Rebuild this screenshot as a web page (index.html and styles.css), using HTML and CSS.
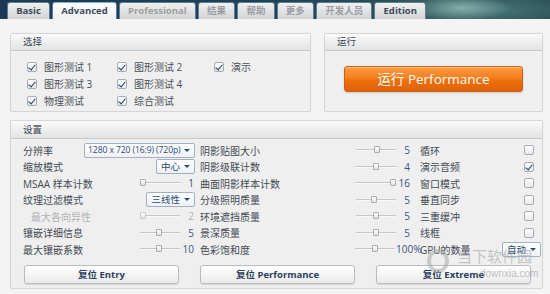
FILE: index.html
```html
<!DOCTYPE html>
<html lang="zh">
<head>
<meta charset="utf-8">
<link rel="stylesheet" href="styles.css">
</head>
<body>
<header class="header">
  <nav class="tabs">
    <div class="tab">Basic</div>
    <div class="tab active">Advanced</div>
    <div class="tab off">Professional</div>
    <div class="tab off">结果</div>
    <div class="tab off">帮助</div>
    <div class="tab off">更多</div>
    <div class="tab off">开发人员</div>
    <div class="tab">Edition</div>
  </nav>
</header>
<main class="page">
  <div class="top-row">
    <section class="panel sel-panel">
      <div class="panel-head">选择</div>
      <div class="sel-grid">
        <div class="chk"><span class="box on"></span>图形测试 1</div>
        <div class="chk"><span class="box on"></span>图形测试 2</div>
        <div class="chk"><span class="box on"></span>演示</div>
        <div class="chk"><span class="box on"></span>图形测试 3</div>
        <div class="chk"><span class="box on"></span>图形测试 4</div>
        <div></div>
        <div class="chk"><span class="box on"></span>物理测试</div>
        <div class="chk"><span class="box on"></span>综合测试</div>
      </div>
    </section>
    <section class="panel run-panel">
      <div class="panel-head">运行</div>
      <div class="run-body"><div class="run-btn">运行 Performance</div></div>
    </section>
  </div>
  <section class="panel settings">
    <div class="panel-head">设置</div>
    <div class="cols">
      <div class="col col1">
        <div class="row"><span class="lbl">分辨率</span><span class="sel sel-res">1280 x 720 (16:9) (720p)<i class="arr"></i></span></div>
        <div class="row"><span class="lbl">缩放模式</span><span class="sel">中心<i class="arr"></i></span></div>
        <div class="row"><span class="lbl">MSAA 样本计数</span><span class="slider"><span class="track"><span class="thumb" style="left:0px"></span></span><span class="val">1</span></span></div>
        <div class="row"><span class="lbl">纹理过滤模式</span><span class="sel">三线性<i class="arr"></i></span></div>
        <div class="row dis"><span class="lbl sub">最大各向异性</span><span class="slider"><span class="track"><span class="thumb" style="left:0px"></span></span><span class="val">2</span></span></div>
        <div class="row"><span class="lbl">镶嵌详细信息</span><span class="slider"><span class="track"><span class="thumb" style="left:16px"></span></span><span class="val">5</span></span></div>
        <div class="row"><span class="lbl">最大镶嵌系数</span><span class="slider"><span class="track"><span class="thumb" style="left:16px"></span></span><span class="val">10</span></span></div>
      </div>
      <div class="col col2">
        <div class="row"><span class="lbl">阴影贴图大小</span><span class="slider"><span class="track"><span class="thumb" style="left:18px"></span></span><span class="val">5</span></span></div>
        <div class="row"><span class="lbl">阴影级联计数</span><span class="slider"><span class="track"><span class="thumb" style="left:17px"></span></span><span class="val">4</span></span></div>
        <div class="row"><span class="lbl">曲面阴影样本计数</span><span class="slider"><span class="track"><span class="thumb" style="left:34px"></span></span><span class="val">16</span></span></div>
        <div class="row"><span class="lbl">分级照明质量</span><span class="slider"><span class="track"><span class="thumb" style="left:15px"></span></span><span class="val">5</span></span></div>
        <div class="row"><span class="lbl">环境遮挡质量</span><span class="slider"><span class="track"><span class="thumb" style="left:17px"></span></span><span class="val">5</span></span></div>
        <div class="row"><span class="lbl">景深质量</span><span class="slider"><span class="track"><span class="thumb" style="left:17px"></span></span><span class="val">5</span></span></div>
        <div class="row"><span class="lbl">色彩饱和度</span><span class="slider"><span class="track"><span class="thumb" style="left:17px"></span></span><span class="val val-wide">100%</span></span></div>
      </div>
      <div class="col col3">
        <div class="row"><span class="lbl">循环</span><span class="box"></span></div>
        <div class="row"><span class="lbl">演示音频</span><span class="box on"></span></div>
        <div class="row"><span class="lbl">窗口模式</span><span class="box"></span></div>
        <div class="row"><span class="lbl">垂直同步</span><span class="box"></span></div>
        <div class="row"><span class="lbl">三重缓冲</span><span class="box"></span></div>
        <div class="row"><span class="lbl">线框</span><span class="box"></span></div>
        <div class="row"><span class="lbl">GPU的数量</span><span class="sel">自动<i class="arr"></i></span></div>
      </div>
    </div>
    <div class="btn-row">
      <div class="btn">复位 Entry</div>
      <div class="btn">复位 Performance</div>
      <div class="btn">复位 Extreme</div>
    </div>
  </section>
</main>
<div class="watermark">
  <span class="wm-logo"></span>
  <span class="wm-cn">当下软件园</span>
  <span class="wm-en">downxia.com</span>
</div>
</body>
</html>
```

FILE: styles.css
```css
* { box-sizing: border-box; }
html, body { margin: 0; padding: 0; }
body {
  width: 550px;
  height: 294px;
  overflow: hidden;
  background: #f4f4f4;
  font-family: "Open Sans", "Noto Sans CJK SC", sans-serif;
  font-size: 10px;
  color: #444a52;
  position: relative;
}
.header {
  height: 19px;
  background:
    radial-gradient(ellipse 70px 18px at 462px 8px, rgba(190,230,220,0.55), rgba(120,170,170,0) 70%),
    radial-gradient(ellipse 160px 30px at 500px 10px, rgba(90,140,140,0.6), rgba(60,100,110,0) 80%),
    linear-gradient(90deg, #1c3a55 0%, #1f4258 50%, #2d5658 80%, #1f3e4a 100%);
  padding-left: 7px;
  display: flex;
  align-items: flex-end;
}
.tabs { display: flex; gap: 2px; height: 17px; }
.tab {
  height: 17px;
  padding: 0 8.2px;
  border: 1px solid #5f7d90;
  border-bottom: none;
  border-radius: 3px 3px 0 0;
  background: linear-gradient(#f0f0f0, #d2d4d6);
  font-weight: bold;
  font-size: 9.5px;
  line-height: 16px;
  color: #3c4b5c;
}
.tab.active {
  background: linear-gradient(#fdfdfd, #eef0f1);
  border-top: 1px solid #7fb0d0;
}
.tab.off { color: #9a9ea2; }
.page { padding: 14px 7px 0 10px; }
.top-row { display: flex; gap: 13px; }
.panel {
  background: #efefef;
  border: 1px solid #d6d6d6;
  border-radius: 2px;
  box-shadow: 0 0 2px rgba(0,0,0,0.06);
}
.panel-head {
  height: 17px;
  line-height: 16px;
  padding-left: 12px;
  background: linear-gradient(#fafafa, #e3e3e3);
  border-bottom: 1px solid #c8c8c8;
  color: #3b4654;
  font-size: 9.5px;
}
.sel-panel { width: 301px; height: 79px; }
.run-panel { width: 219px; height: 79px; }
.sel-grid {
  display: grid;
  grid-template-columns: 90px 97px auto;
  grid-auto-rows: 17px;
  padding: 7px 0 0 16px;
}
.chk { display: flex; align-items: center; gap: 7px; color: #4a5058; }
.box {
  width: 10px; height: 10px;
  border: 1px solid #a8acb2;
  border-radius: 2px;
  background: linear-gradient(#ffffff, #e6e8ea);
  position: relative;
  flex: none;
}
.box.on::after {
  content: "";
  position: absolute;
  left: 2px; top: 0px;
  width: 3px; height: 6px;
  border-right: 1.6px solid #1f3f6e;
  border-bottom: 1.6px solid #1f3f6e;
  transform: rotate(40deg);
}
.run-body { padding: 15px 0 0 19px; }
.run-btn {
  width: 179px; height: 26px;
  border: 1px solid #c9601a;
  border-radius: 3px;
  background: linear-gradient(#fb9a45 0%, #f6801f 45%, #ef6f0a 55%, #e0620a 100%);
  box-shadow: inset 0 1px 0 rgba(255,220,180,0.6), 0 1px 2px rgba(0,0,0,0.15);
  color: #fff;
  font-size: 13.5px;
  line-height: 24px;
  text-align: center;
}
.settings { margin-top: 8px; width: 533px; height: 169px; }
.settings .panel-head { height: 18px; line-height: 17px; }
.cols { display: flex; padding: 3px 0 0 12px; }
.col { display: flex; flex-direction: column; }
.col1 { width: 172px; }
.col2 { width: 211px; margin-left: 5px; }
.col3 { width: 121px; margin-left: 9px; }
.row { height: 16.5px; display: flex; align-items: center; }
.lbl { flex: 1; white-space: nowrap; color: #444a52; }
.lbl.sub { padding-left: 8px; }
.row.dis .lbl, .row.dis .val { color: #b0b3b6; }
.row.dis .thumb { border-color: #c8c8c8; }
.sel {
  height: 15px;
  padding: 0 4px 0 4px;
  border: 1px solid #a2b0c2;
  border-radius: 2px;
  background: linear-gradient(#ffffff, #eef1f4);
  color: #2c4a74;
  font-size: 9.5px;
  line-height: 13px;
  display: flex;
  align-items: center;
  gap: 4px;
  white-space: nowrap;
}
.sel-res { width: 111px; font-size: 8.6px; padding: 0 3px; gap: 3px; letter-spacing: -0.1px; }
.arr {
  width: 0; height: 0;
  border-left: 3px solid transparent;
  border-right: 3px solid transparent;
  border-top: 3px solid #2c4a74;
}
.slider { display: flex; align-items: center; }
.track {
  width: 40px; height: 2px;
  background: #c4c6c8;
  border-bottom: 1px solid #f8f8f8;
  position: relative;
}
.thumb {
  position: absolute;
  top: -3px;
  width: 6px; height: 7px;
  background: linear-gradient(#ffffff, #e2e2e2);
  border: 1px solid #a9adb2;
  border-radius: 1px;
}
.val {
  width: 14px;
  margin-right: 1px;
  text-align: right;
  color: #3a5680;
}
.val-wide { width: 15px; text-align: left; padding-left: 1px; overflow: visible; white-space: nowrap; }
.col3 .box { margin-right: 7px; }
.btn-row { display: flex; gap: 21px; padding: 7px 0 0 13px; }
.btn {
  width: 155px; height: 19px;
  border: 1px solid #b9bcc0;
  border-radius: 3px;
  background: linear-gradient(#ffffff, #e9eaeb);
  box-shadow: 0 1px 1px rgba(0,0,0,0.12);
  text-align: center;
  font-weight: bold;
  font-size: 9.5px;
  line-height: 17px;
  color: #2b3f5c;
}
.watermark {
  position: absolute;
  left: 427px; top: 246px;
  width: 110px; height: 40px;
  pointer-events: none;
}
.wm-logo {
  position: absolute;
  left: 0; top: 3px;
  width: 22px; height: 24px;
  border: 4px solid rgba(170,170,170,0.55);
  border-radius: 50%;
}
.wm-cn {
  position: absolute;
  left: 30px; top: 1px;
  font-size: 15px;
  line-height: 18px;
  color: rgba(165,165,165,0.6);
}
.wm-en {
  position: absolute;
  left: 53px; top: 22px;
  font-family: "Liberation Sans", sans-serif;
  font-size: 10px;
  color: rgba(150,150,150,0.6);
}
```
